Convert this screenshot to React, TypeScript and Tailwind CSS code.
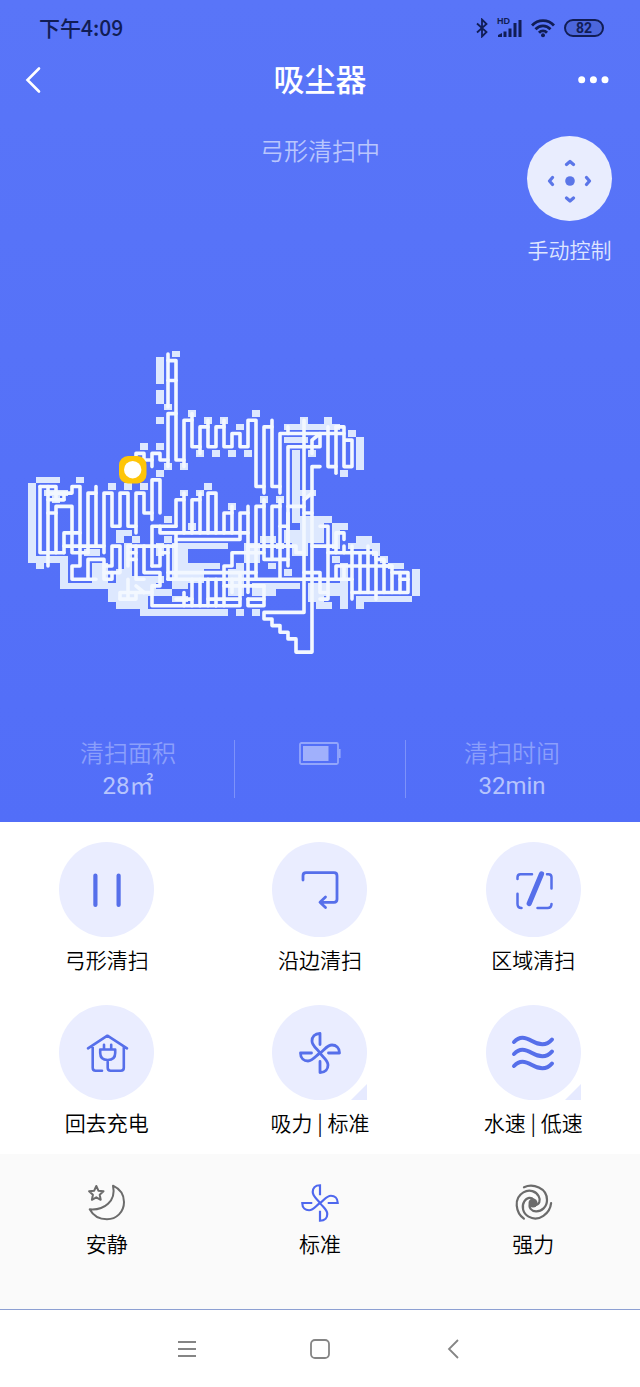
import React, { useState } from 'react';

// Size of one map cell in px
const CELL_W = 8;
const CELL_H = 6.625;

// [col, row, width, height]
const cells: number[][] = [
  [18, 0, 1, 1], [16, 1, 1, 4], [16, 6, 1, 2], [17, 8, 1, 1], [16, 10, 1, 1],
  [20, 9, 1, 1], [22, 10, 1, 1], [24, 10, 1, 1], [26, 11, 1, 1], [28, 9, 1, 1],
  [21, 15, 1, 1], [23, 15, 1, 1], [25, 15, 1, 1], [27, 15, 1, 1],
  [14, 14, 1, 1], [16, 14, 1, 1], [17, 17, 1, 1], [19, 17, 1, 1], [16, 18, 1, 1],
  [1, 19, 3, 1], [6, 19, 1, 1], [10, 20, 1, 1], [12, 20, 1, 1], [14, 20, 1, 1],
  [19, 21, 1, 1], [21, 21, 1, 1], [22, 20, 1, 1], [25, 23, 1, 1], [29, 22, 1, 1], [31, 22, 1, 1],
  [0, 20, 1, 12], [1, 31, 4, 1], [1, 32, 1, 1], [4, 32, 1, 4], [5, 35, 6, 1], [10, 36, 1, 2],
  [11, 35, 5, 2], [11, 37, 4, 2], [14, 39, 9, 1], [2, 21, 3, 1], [3, 22, 1, 1],
  [11, 27, 2, 1], [11, 28, 1, 1], [13, 28, 1, 1], [7, 30, 2, 1], [8, 32, 2, 3],
  [17, 25, 1, 1], [20, 26, 1, 1], [17, 28, 1, 1], [16, 29, 1, 2], [12, 29, 1, 6], [11, 33, 1, 2],
  [13, 34, 4, 1], [16, 36, 2, 1], [18, 35, 2, 1], [18, 37, 2, 1],
  [18, 29, 2, 6], [20, 29, 5, 1], [20, 32, 4, 1], [20, 33, 2, 2],
  [23, 39, 1, 1], [24, 39, 1, 1], [26, 39, 1, 1], [28, 39, 1, 1],
  [25, 33, 2, 4], [26, 32, 1, 1], [27, 29, 2, 3], [29, 28, 2, 1], [30, 32, 1, 1],
  [32, 33, 1, 1], [28, 36, 3, 1], [28, 35, 6, 1],
  [32, 11, 7, 1], [32, 13, 3, 1], [34, 10, 1, 1], [37, 10, 1, 1], [40, 12, 1, 1], [41, 13, 1, 5],
  [35, 15, 1, 1], [39, 18, 1, 1], [33, 15, 1, 11], [34, 21, 2, 1], [33, 25, 5, 1], [32, 27, 5, 2],
  [34, 26, 3, 1], [38, 26, 2, 1], [31, 29, 1, 1], [33, 29, 2, 2],
  [38, 27, 1, 3], [40, 29, 3, 1], [41, 28, 2, 1], [43, 29, 1, 2], [38, 31, 1, 1], [39, 32, 1, 3], [45, 32, 2, 1], [48, 33, 1, 4],
  [41, 37, 7, 1], [41, 38, 1, 1], [39, 35, 1, 4], [37, 35, 2, 2], [36, 38, 2, 1], [35, 35, 2, 3],
  [44, 31, 1, 1],
];

// Track of the robot, "col,row" points at cell centres
const tracks: string[] = [
  '17,0 17,8', '17,1 18,1 18,16 19,16 19,17', '17,4 18,4', '17,17 17,9 18,9',
  '19,16 19,10 20,10', '20,9 20,14 21,14 21,15', '21,14 21,11 22,11', '22,10 22,14 23,14 23,11 24,11',
  '24,10 24,14 25,14 25,12 26,12 26,14 27,14 27,10 28,10 28,20 29,20 29,21',
  '29,20 29,11 30,11', '30,10 30,20 31,20 31,21', '31,20 31,12 39,12',
  '13,16 13,15 14,15 14,16 15,16 15,17', '15,16 15,15 16,15 16,16 17,16',
  '1,20 3,20 3,22 4,22 4,21 5,21 5,20 6,20 6,32 5,32 5,34 8,34', '1,20 1,30 4,30', '2,20 2,32', '2,21 4,21', '2,22 4,22',
  '3,30 3,23 5,23 5,30 7,30', '2,24 3,24', '4,30 4,27 6,27', '4,29 8,29',
  '7,30 7,21 8,21', '8,20 8,29 9,29', '9,30 9,21 10,21 10,26 11,26 11,21 12,21 12,26 13,26 13,27',
  '13,26 13,21 14,21 14,24 15,24 15,25', '15,24 15,19 16,19 16,24', '16,26 16,27 27,27', '15,32 15,26 18,26',
  '18,26 18,22 19,22', '19,21 19,27', '20,27 20,22 21,22', '21,21 21,27', '22,27 22,21 23,21 23,27',
  '24,27 24,24 25,24', '25,23 25,27', '26,27 26,24 27,24', '18,28 26,28 26,27',
  '7,34 7,31 9,31 9,34 10,34 10,33', '9,33 11,33 11,29 10,29 10,32 9,32',
  '12,29 12,32', '12,29 18,29', '12,30 13,30', '12,31 13,31', '13,29 13,34 14,34', '14,29 14,33 16,33 16,35 15,35 15,38 23,38',
  '12,34 12,37', '11,37 11,36 15,36', '13,35 14,36', '11,37 13,37 13,36', '15,32 16,32 16,29', '16,30 17,30',
  '17,29 17,34 18,34 18,27', '17,33 28,33', '17,34 40,34', '18,37 20,37', '19,38 19,36',
  '20,34 20,38', '21,34 21,38', '22,34 22,38', '23,34 23,38', '24,33 24,38',
  '22,37 26,37', '23,38 26,38 26,33', '24,33 24,32 25,32 25,30 29,30', '25,36 25,34', '24,35 29,35',
  '27,23 27,36', '28,34 28,23 29,23', '27,37 27,38 29,38 29,35 28,35', '27,37 29,37',
  '29,22 29,31 32,31', '30,31 30,23 31,23', '31,22 31,34', '32,24 32,32', '27,29 33,29 33,30 34,30', '27,30 27,29',
  '32,29 32,14 36,14 36,12 35,13 35,15', '32,11 32,12', '37,11 37,17 38,17', '38,11 38,18', '38,11 39,11 39,17 40,17 40,13 39,13',
  '32,23 34,23', '34,22 35,21', '31,26 32,26', '34,24 35,24',
  '34,10 34,39 29,39 29,40 30,40 30,41 31,41 31,42 32,42 32,43 33,43 33,45 35,45 35,17 36,17',
  '36,26 37,26 37,37 36,37', '38,30 38,27 39,27 39,28', '35,29 38,29', '37,30 43,30', '38,34 38,32 45,32',
  '34,33 36,33 36,36 37,36', '34,34 36,34', '39,29 39,30', '39,32 39,34',
  '40,29 40,37', '41,30 41,36', '42,29 42,36', '43,30 43,37', '44,32 44,36', '45,33 45,36', '46,33 46,36',
  '43,30 43,31 44,31 44,32 45,32 45,33 47,33 47,36 40,36', '46,34 47,34',
];

const toPoints = (track: string) =>
  track
    .split(' ')
    .map((p) => {
      const [c, r] = p.split(',').map(Number);
      return `${32 + c * CELL_W},${(353 + r * CELL_H).toFixed(1)}`;
    })
    .join(' ');

const CleaningMap: React.FC = () => (
  <svg className="ml-5 mt-20 h-[316px] w-[412px]" viewBox="20 344 412 316" role="img" aria-label="清扫地图">
    <g fill="#dde8fe" shapeRendering="crispEdges">
      {cells.map(([c, r, w, h], i) => (
        <rect key={i} x={28 + c * CELL_W} y={349.7 + r * CELL_H} width={w * CELL_W} height={h * CELL_H} />
      ))}
    </g>
    <g fill="none" stroke="#f3f8ff" strokeWidth="3.600" strokeLinecap="round" strokeLinejoin="round">
      {tracks.map((t, i) => (
        <polyline key={i} points={toPoints(t)} />
      ))}
    </g>
    <rect x="119" y="455" width="27.5" height="27.5" rx="9" fill="#fec508" />
    <circle cx="132.7" cy="468.7" r="8.7" fill="#fff" />
  </svg>
);

const StatusBar: React.FC = () => (
  <div className="flex h-14 items-center justify-between pl-[39px] pr-9 text-[#111d55]">
    <span className="text-[21px] font-medium">下午4:09</span>
    <div className="flex items-center gap-[9px]">
      <svg className="h-5 w-3" viewBox="0 0 12 20" fill="none" stroke="currentColor" strokeWidth="1.8">
        <path d="M1 5.5L10.5 14L6 18.5V1.5L10.5 6L1 14.5" />
      </svg>
      <span className="flex h-6 w-[25px] flex-col">
        <span className="font-['Liberation_Sans',sans-serif] text-[9px] font-bold leading-[10px]">HD</span>
        <svg className="-mt-2 h-5 w-[25px]" viewBox="0 0 25 20" fill="currentColor">
          <path d="M1 19v-2l4-2v4zM6.500 13.500h3V19h-3zM11.500 10.500h3V19h-3zM16.500 5h3v14h-3zM21.500 2h3v17h-3z" />
        </svg>
      </span>
      <svg className="h-5 w-6" viewBox="0 0 24 20" fill="none" stroke="currentColor" strokeWidth="2.800">
        <path d="M1 7.500C7 .9 17 .9 23 7.500M4.500 11.200C8.700 6.700 15.300 6.700 19.500 11.200M8 14.800C10.300 12.300 13.700 12.300 16 14.800" />
        <circle cx="12" cy="17.300" r="2" fill="currentColor" stroke="none" />
      </svg>
      <span className="flex h-[18px] w-10 items-center justify-center rounded-full border-2 border-[#111d55] bg-[#4c67dd] font-[Roboto] text-sm font-bold">
        82
      </span>
    </div>
  </div>
);

const fanBlade = 'M24 15.500V4.500C18.500 4.500 16 8 16 12C16 17 21.500 20 24 24';

const FanBlades: React.FC = () => (
  <>
    {[0, 90, 180, 270].map((a) => (
      <path key={a} d={fanBlade} transform={`rotate(${a} 24 24)`} />
    ))}
  </>
);

interface Action {
  label: string;
  icon: React.ReactNode;
  more?: boolean;
}

const ActionButton: React.FC<Action> = ({ label, icon, more }) => (
  <button type="button" className="flex flex-col items-center gap-1.5">
    <span className="relative flex size-[95px] items-center justify-center rounded-full bg-[#eaedff]">
      <svg
        className="size-12 text-[#566fea]"
        viewBox="0 0 48 48"
        fill="none"
        stroke="currentColor"
        strokeWidth="2.800"
        strokeLinecap="round"
        strokeLinejoin="round"
      >
        {icon}
      </svg>
      {more && (
        <svg className="absolute bottom-0 right-0 size-4" viewBox="0 0 16 16" fill="#e6eaff">
          <path d="M16 0V16H0Z" />
        </svg>
      )}
    </span>
    <span className="text-[21px] font-[350] leading-8">{label}</span>
  </button>
);

const suctionModes = [
  {
    name: '安静',
    icon: (
      <svg className="size-10" viewBox="0 0 40 40" fill="none" stroke="currentColor" strokeWidth="2" strokeLinejoin="round">
        <path d="M26 2.700C33 6 37 12 37 19C37 29 29.500 36.300 20 36.300C12.500 36.300 6 32.500 2.700 26.300C17 27.500 29.500 18 26 2.700Z" />
        <path d="M9.300 3l2.100 4.700 5.100.6-3.800 3.500 1 5-4.400-2.500-4.400 2.500 1-5L2.100 8.300l5.100-.6z" />
      </svg>
    ),
  },
  {
    name: '标准',
    icon: (
      <svg className="size-10" viewBox="2 2 44 44" fill="none" stroke="currentColor" strokeWidth="2.400">
        <FanBlades />
      </svg>
    ),
  },
  {
    name: '强力',
    icon: (
      <svg className="size-10" viewBox="0 0 40 40" fill="none" stroke="currentColor" strokeWidth="2.200" strokeLinecap="round">
        {[0, 120, 240].map((a) => (
          <path
            key={a}
            d="M11 4.300C20 .2 34 5 34 17C34 24 28.500 28.500 23 28.300C18 28.200 15.500 24.500 17 21"
            transform={`rotate(${a} 20 20)`}
          />
        ))}
        <circle cx="20" cy="20" r="4.500" fill="currentColor" stroke="none" />
      </svg>
    ),
  },
];

const App: React.FC = () => {
  const [suction, setSuction] = useState('标准');

  const actions: Action[] = [
    { label: '弓形清扫', icon: <path d="M12.400 9.500V39M35.600 9.500V39" strokeWidth="4.200" /> },
    {
      label: '沿边清扫',
      icon: <path d="M7 14V9.700Q7 6.700 10 6.700H38Q41 6.700 41 9.700V33.300Q41 36.300 38 36.300H24.500M29.500 31L24 36.300L29.500 41.500" />,
    },
    {
      label: '区域清扫',
      icon: (
        <>
          <path
            d="M8.500 13V11.300Q8.500 8.300 11.500 8.300H23M38 8.300H39.500Q42.500 8.300 42.500 11.300V22.500M8.500 27.800V38Q8.500 42 12.500 42M28.500 42H38.500Q42.500 42 42.500 38"
            strokeWidth="2.500"
          />
          <path d="M32.500 8L20.200 37.500" strokeWidth="5.200" />
        </>
      ),
    },
    {
      label: '回去充电',
      icon: (
        <path
          d="M5 19.300L24.400 6.700L44 19.300M9.700 18V38.700Q9.700 41.700 12.700 41.700H19M40.800 18V38.700Q40.800 41.700 37.800 41.700H27.700Q24.700 41.700 24.700 38.700V31M17.200 20.500H32.200V24Q32.200 31 24.700 31Q17.200 31 17.200 24ZM21 15.700V20M28.200 15.700V20"
          strokeWidth="2.600"
        />
      ),
    },
    { label: `吸力 | ${suction}`, icon: <FanBlades />, more: true },
    {
      label: '水速 | 低速',
      icon: (
        <path
          d="M5 13C10.500 7 16 8 23 12S37.500 17 43 10.500M5 25C10.500 19 16 20 23 24S37.500 29 43 22.500M5 37C10.500 31 16 32 23 36S37.500 41 43 34.500"
          strokeWidth="4"
        />
      ),
      more: true,
    },
  ];

  return (
    <div className="min-h-screen bg-white font-['Noto_Sans_CJK_SC',sans-serif] text-black">
      <div className="bg-gradient-to-b from-[#5975f8] to-[#526ef8]">
        <StatusBar />

        <header className="flex h-12 items-center justify-between px-6 text-white">
          <button type="button" aria-label="返回" className="w-10">
            <svg className="h-7 w-5" viewBox="0 0 20 28" fill="none" stroke="currentColor" strokeWidth="2.600" strokeLinecap="round">
              <path d="M15 2.500L3.500 14L15 25.500" />
            </svg>
          </button>
          <h1 className="pb-1 text-[31px] font-medium leading-10">吸尘器</h1>
          <button type="button" aria-label="更多">
            <svg className="h-7 w-10" viewBox="0 0 40 28" fill="currentColor">
              <circle cx="5.700" cy="13.700" r="3.500" />
              <circle cx="17.400" cy="13.700" r="3.500" />
              <circle cx="29" cy="13.700" r="3.500" />
            </svg>
          </button>
        </header>

        <div className="grid grid-cols-[1fr_auto_1fr] pt-8">
          <p className="col-start-2 text-2xl font-[350] leading-7 text-[#b9c6fd]">弓形清扫中</p>
          <button type="button" className="mr-7 flex flex-col items-center gap-3 justify-self-end text-[#dfe6ff]">
            <span className="flex size-[85px] items-center justify-center rounded-full bg-[#e9edfe]">
              <svg
                className="size-12 text-[#5b76e8]"
                viewBox="0 0 48 48"
                fill="none"
                stroke="currentColor"
                strokeWidth="3.200"
                strokeLinecap="round"
                strokeLinejoin="round"
              >
                <path d="M20.500 9.500L24 6.500L27.500 9.500M20.500 43L24 46L27.500 43M6.500 22.500L3.500 26L6.500 29.500M40.500 22.500L43.500 26L40.500 29.500" />
                <circle cx="24" cy="26" r="4.800" fill="currentColor" stroke="none" />
              </svg>
            </span>
            <span className="text-[21px] font-[350] leading-8">手动控制</span>
          </button>
        </div>

        <CleaningMap />

        <div className="grid grid-cols-3 px-8 pb-[19px] pt-[74px] text-center text-2xl font-[350] leading-[34px] text-[#b6c4fd]">
          <div>
            <p className="text-[#8b9ffb]">清扫面积</p>
            <p className="font-[Roboto,'Noto_Sans_CJK_SC',sans-serif] font-normal">28㎡</p>
          </div>
          <div className="mx-[10px] my-[5px] flex justify-center border-x border-[#7d92fa] pt-0.5">
            <svg className="h-[23px] w-[42px]" viewBox="0 0 42 23" role="img" aria-label="电量" fill="none" stroke="#93a6fb" strokeWidth="1.800">
              <rect x="1" y="1" width="38" height="21" rx="1.500" />
              <rect x="4" y="4" width="25.500" height="15" fill="#a0b0fc" stroke="none" />
              <path d="M40.700 7V16" />
            </svg>
          </div>
          <div>
            <p className="text-[#8b9ffb]">清扫时间</p>
            <p className="font-[Roboto,'Noto_Sans_CJK_SC',sans-serif] font-normal">32min</p>
          </div>
        </div>
      </div>

      <div className="grid grid-cols-3 gap-y-[30px] pb-4 pt-5">
        {actions.map((action) => (
          <ActionButton key={action.label} {...action} />
        ))}
      </div>

      <div className="grid grid-cols-3 border-b border-[#8c9fd2] bg-[#fafafa] pb-[50px] pt-[29px]">
        {suctionModes.map((mode) => (
          <button
            key={mode.name}
            type="button"
            aria-pressed={mode.name === suction}
            onClick={() => setSuction(mode.name)}
            className="flex flex-col items-center gap-1"
          >
            <span className={mode.name === suction ? 'text-[#4f68ee]' : 'text-[#6b6b6b]'}>{mode.icon}</span>
            <span className="text-[21px] font-[350] leading-8">{mode.name}</span>
          </button>
        ))}
      </div>

      <nav className="flex h-[77px] items-center justify-center text-[#858585]">
        <button type="button" aria-label="菜单" className="flex w-[133px] justify-center">
          <svg className="size-5" viewBox="0 0 20 20" fill="none" stroke="currentColor" strokeWidth="1.800">
            <path d="M1 3H19M1 10H19M1 17H19" />
          </svg>
        </button>
        <button type="button" aria-label="主屏幕" className="flex w-[133px] justify-center">
          <svg className="size-5" viewBox="0 0 20 20" fill="none" stroke="currentColor" strokeWidth="1.800">
            <rect x="1" y="1" width="18" height="18" rx="4" />
          </svg>
        </button>
        <button type="button" aria-label="返回上一页" className="flex w-[133px] justify-center">
          <svg className="size-5" viewBox="0 0 20 20" fill="none" stroke="currentColor" strokeWidth="1.800">
            <path d="M15 1L6 10L15 19" />
          </svg>
        </button>
      </nav>
    </div>
  );
};

export default App;
